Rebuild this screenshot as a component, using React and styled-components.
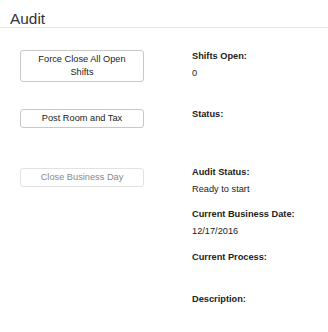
import styled, { createGlobalStyle } from "styled-components";

const GlobalStyle = createGlobalStyle`
  html, body {
    margin: 0;
    padding: 0;
    background: #fff;
  }
  body {
    font-family: "Liberation Sans", Arial, sans-serif;
    color: #222;
  }
`;

const rows = [
  {
    action: "Force Close All Open Shifts",
    fields: [{ label: "Shifts Open:", value: "0" }],
  },
  {
    action: "Post Room and Tax",
    offset: 1,
    fields: [{ label: "Status:", value: "" }],
  },
  {
    action: "Close Business Day",
    disabled: true,
    offset: 2,
    fields: [
      { label: "Audit Status:", value: "Ready to start" },
      { label: "Current Business Date:", value: "12/17/2016" },
      { label: "Current Process:", value: "" },
      { label: "Description:", value: "" },
    ],
  },
];

function App() {
  return (
    <>
      <GlobalStyle />
      <Page>
        <Header>
          <Title>Audit</Title>
        </Header>
        <Body>
          {rows.map((row) => (
            <Row key={row.action}>
              <ActionCell offset={row.offset || 0}>
                <ActionButton disabled={row.disabled}>{row.action}</ActionButton>
              </ActionCell>
              <InfoCell>
                {row.fields.map((f) => (
                  <Field key={f.label}>
                    <Label>{f.label}</Label>
                    <Value>{f.value}</Value>
                  </Field>
                ))}
              </InfoCell>
            </Row>
          ))}
        </Body>
      </Page>
    </>
  );
}

const Page = styled.div`
  width: 328px;
  height: 332px;
  overflow: hidden;
  background: #fff;
`;

const Header = styled.div`
  padding: 10px 10px 0;
  border-bottom: 1px solid #e5e5e5;
`;

const Title = styled.h1`
  margin: 0;
  font-size: 15.4px;
  line-height: 17px;
  font-weight: 400;
  color: #333;
`;

const Body = styled.div`
  padding: 22px 0 0 20px;
`;

const Row = styled.div`
  display: grid;
  grid-template-columns: 124px 1fr;
  column-gap: 48px;
  margin-bottom: 15.5px;
`;

const ActionCell = styled.div`
  display: flex;
  flex-direction: column;
  padding-top: ${({ offset }) => offset}px;
`;

const ActionButton = styled.button`
  width: 124px;
  padding: 2px 6px;
  font-family: "Liberation Sans", Arial, sans-serif;
  font-size: 9.24px;
  line-height: 13.2px;
  text-align: center;
  background: #fff;
  color: ${({ disabled }) => (disabled ? "#8a8a8a" : "#222")};
  border: 1px solid ${({ disabled }) => (disabled ? "#e2e2e2" : "#c8c8c8")};
  border-radius: 3px;
  cursor: ${({ disabled }) => (disabled ? "default" : "pointer")};
`;

const InfoCell = styled.div`
  display: flex;
  flex-direction: column;
`;

const Field = styled.div`
  margin-bottom: 12.5px;
  font-size: 9.24px;
  line-height: 13.2px;
`;

const Label = styled.div`
  font-weight: 700;
  margin-bottom: 3.5px;
`;

const Value = styled.div`
  min-height: 13.2px;
`;

export default App;
